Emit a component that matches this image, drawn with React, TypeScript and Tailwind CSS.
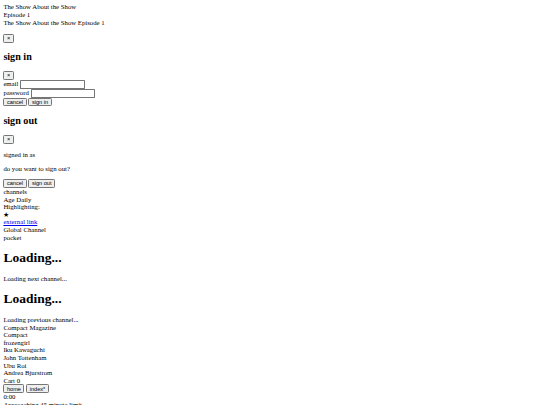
const serif = "font-['Liberation_Serif','Times_New_Roman',serif]";

function Btn({ children }: { children: React.ReactNode }) {
  return (
    <button className="inline-block h-[21px] rounded-[3px] border border-[#767676] bg-[#efefef] px-[6px] align-baseline font-['Liberation_Sans',Arial,sans-serif] text-[13.333px] leading-[15.33px] text-black">
      {children}
    </button>
  );
}

function Field({ label }: { label: string }) {
  return (
    <div>
      {label}{" "}
      <input className="h-[21px] w-[153px] rounded-[2px] border border-[#767676] bg-white px-[2px] align-baseline text-[13.333px]" />
    </div>
  );
}

const people = [
  "Compact Magazine",
  "Compact",
  "frozengirl",
  "Iku Kawaguchi",
  "John Tottenham",
  "Ubu Roi",
  "Andrea Bjurstrom",
];

export default function App() {
  return (
    <div className="h-[405px] w-[540px] overflow-hidden bg-white">
      <div className={`[zoom:0.421875] w-[1280px] p-2 text-[16px] leading-[18px] text-black ${serif}`}>
        <div>The Show About the Show</div>
        <div>Episode 1</div>
        <div>The Show About the Show Episode 1</div>

        <div className="mt-[18px]">
          <Btn>×</Btn>
          <h2 className="my-[19.92px] text-[24px] font-bold leading-[27.6px]">sign in</h2>
          <Btn>×</Btn>
          <Field label="email" />
          <Field label="password" />
          <Btn>cancel</Btn> <Btn>sign in</Btn>
        </div>

        <div>
          <h2 className="my-[19.92px] text-[24px] font-bold leading-[27.6px]">sign out</h2>
          <Btn>×</Btn>
          <p className="my-4">signed in as</p>
          <p className="my-4">do you want to sign out?</p>
          <Btn>cancel</Btn> <Btn>sign out</Btn>
        </div>

        <div>channels</div>
        <div>Age Daily</div>
        <div>Highlighting:</div>
        <div>★</div>
        <div>
          <a href="#" className="text-[#0000ee] underline">
            external link
          </a>
        </div>
        <div>Global Channel</div>
        <div>pocket</div>

        <h1 className="my-[21.44px] text-[32px] font-bold leading-[36.8px]">Loading...</h1>
        <p className="my-4">Loading next channel...</p>
        <h1 className="my-[21.44px] text-[32px] font-bold leading-[36.8px]">Loading...</h1>
        <div>Loading previous channel...</div>
        {people.map((p) => (
          <div key={p}>{p}</div>
        ))}
        <div>Cart 0</div>
        <div>
          <Btn>home</Btn> <Btn>index*</Btn>
        </div>
        <div>0:00</div>
        <div>Approaching 45 minute limit</div>
      </div>
    </div>
  );
}
